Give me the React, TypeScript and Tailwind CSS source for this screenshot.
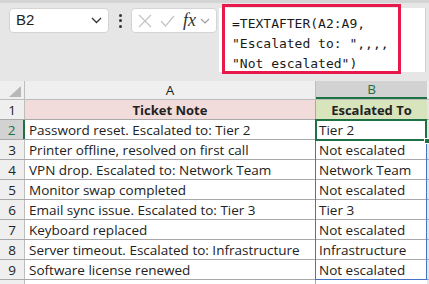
import React from 'react';

const rows: [string, string][] = [
  ['Password reset. Escalated to: Tier 2', 'Tier 2'],
  ['Printer offline, resolved on first call', 'Not escalated'],
  ['VPN drop. Escalated to: Network Team', 'Network Team'],
  ['Monitor swap completed', 'Not escalated'],
  ['Email sync issue. Escalated to: Tier 3', 'Tier 3'],
  ['Keyboard replaced', 'Not escalated'],
  ['Server timeout. Escalated to: Infrastructure', 'Infrastructure'],
  ['Software license renewed', 'Not escalated'],
];

const cellFont = { fontFamily: '"Open Sans", "Noto Sans", sans-serif' };

const App = () => {
  return (
    <div className="w-[429px] h-[284px] overflow-hidden bg-[#e6e6e6] text-[#222]" style={cellFont}>
      {/* formula bar area */}
      <div className="relative h-[81px] border-t-[3px] border-[#d4d4d4]">
        <div className="flex items-start pt-[5px] pl-[9px]">
          {/* name box */}
          <div className="w-[100px] h-[25px] bg-white border border-[#d4d4d4] rounded-[4px] flex items-center justify-between pl-[6px] pr-[6px]">
            <span className="text-[15px] text-[#222]" style={{ fontFamily: '"Liberation Sans", sans-serif' }}>B2</span>
            <svg width="11" height="7" viewBox="0 0 11 7" fill="none">
              <path d="M1 1l4.5 4.5L10 1" stroke="#333" strokeWidth="1.3" />
            </svg>
          </div>
          {/* dots */}
          <div className="w-[22px] h-[25px] flex flex-col items-center justify-center gap-[2.5px]">
            <div className="w-[3px] h-[3px] bg-[#333] rounded-full" />
            <div className="w-[3px] h-[3px] bg-[#333] rounded-full" />
            <div className="w-[3px] h-[3px] bg-[#333] rounded-full" />
          </div>
          {/* cancel / enter / fx */}
          <div className="w-[86px] h-[25px] bg-white border border-[#d4d4d4] rounded-[4px] flex items-center pl-[6px] gap-[8px]">
            <svg width="14" height="14" viewBox="0 0 14 14" fill="none">
              <path d="M1 1l12 12M13 1L1 13" stroke="#c4c4c4" strokeWidth="1.2" />
            </svg>
            <svg width="15" height="12" viewBox="0 0 15 12" fill="none">
              <path d="M1 6l4.5 5L14 1" stroke="#c4c4c4" strokeWidth="1.2" />
            </svg>
            <span className="italic text-[18px] leading-none text-[#333] -mt-[2px]" style={{ fontFamily: '"Liberation Serif", serif' }}>fx</span>
            <svg width="10" height="6" viewBox="0 0 10 6" fill="none" className="-ml-[4px]">
              <path d="M1 1l4 4 4-4" stroke="#999" strokeWidth="1.1" />
            </svg>
          </div>
          {/* formula input */}
          <div className="ml-[2px] w-[207px] h-[64px] bg-white border-r border-[#cfcfcf] pl-[13px] pt-[6px] text-[13px] leading-[20px] text-[#1a1a1a]" style={{ fontFamily: '"DejaVu Sans Mono", "Liberation Mono", monospace' }}>
            <div className="whitespace-pre">=TEXTAFTER(A2:A9,</div>
            <div className="whitespace-pre">"Escalated to: ",,,,</div>
            <div className="whitespace-pre">"Not escalated")</div>
          </div>
        </div>
        {/* red annotation */}
        <div className="absolute left-[222px] top-[1px] w-[179px] h-[70px] border-[3.5px] border-[#e8194a] pointer-events-none" />
      </div>

      {/* sheet */}
      <div className="relative">
        {/* column headers */}
        <div className="flex h-[19px] bg-[#efefef] border-b border-[#bdbdbd] text-[13.5px]">
          <div className="w-[25px] shrink-0 border-r border-[#bdbdbd] relative">
            <svg width="12" height="11" viewBox="0 0 12 11" className="absolute right-[3px] bottom-[2px]">
              <path d="M12 0V11H0Z" fill="#b8b8b8" />
            </svg>
          </div>
          <div className="w-[291px] shrink-0 flex items-center justify-center border-r border-[#bdbdbd]">A</div>
          <div className="w-[111px] shrink-0 flex items-center justify-center bg-[#d2d2d2] text-[#1e7145] border-b-2 border-[#1e7145]">B</div>
        </div>

        {/* row 1 */}
        <div className="flex h-[20px] border-b border-[#a9a9a9] text-[13.5px] leading-[18px]">
          <div className="w-[25px] shrink-0 bg-[#efefef] border-r border-[#bdbdbd] flex items-end justify-center">1</div>
          <div className="w-[291px] shrink-0 bg-[#f2dcdb] border-r border-[#a9a9a9] flex items-end justify-center font-bold text-[13px]">Ticket Note</div>
          <div className="w-[111px] shrink-0 bg-[#d8e4bc] flex items-end justify-center font-bold text-[13px]">Escalated To</div>
        </div>

        {rows.map(([note, result], i) => (
          <div key={i} className="flex h-[20px] border-b border-[#a9a9a9] text-[13.5px] leading-[18px]">
            <div
              className={
                i === 0
                  ? 'w-[25px] shrink-0 bg-[#d2d2d2] text-[#1e7145] border-r-2 border-[#1e7145] flex items-end justify-center'
                  : 'w-[25px] shrink-0 bg-[#efefef] border-r border-[#bdbdbd] flex items-end justify-center'
              }
            >
              {i + 2}
            </div>
            <div className="w-[291px] shrink-0 bg-white border-r border-[#a9a9a9] flex items-end pl-[4px] whitespace-nowrap overflow-hidden">{note}</div>
            <div className="w-[111px] shrink-0 bg-white flex items-end pl-[3px] whitespace-nowrap overflow-hidden">{result}</div>
          </div>
        ))}
        <div className="flex h-[20px]">
          <div className="w-[25px] shrink-0 bg-[#efefef] border-r border-[#bdbdbd]" />
          <div className="w-[291px] shrink-0 bg-white border-r border-[#a9a9a9]" />
          <div className="w-[111px] shrink-0 bg-white" />
        </div>

        {/* spill range outline */}
        <div className="absolute left-[315px] top-[38px] w-[112px] h-[161px] border border-[#4472c4] pointer-events-none" />
        {/* active cell */}
        <div className="absolute left-[315px] top-[38px] w-[112px] h-[22px] border-2 border-[#1e7145] pointer-events-none" />
        <div className="absolute left-[424px] top-[57px] w-[6px] h-[6px] bg-[#1e7145] border border-white pointer-events-none" />
      </div>
    </div>
  );
};

export default App;
